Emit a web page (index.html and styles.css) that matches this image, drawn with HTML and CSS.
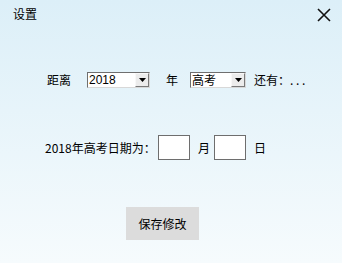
FILE: index.html
```html
<!DOCTYPE html>
<html lang="zh">
<head>
<meta charset="utf-8">
<link rel="stylesheet" href="styles.css">
</head>
<body>
<div class="win">
  <div class="titlebar">
    <span class="title">设置</span>
    <svg class="close" width="14" height="14" viewBox="0 0 14 14"><path d="M1 1 L13 13 M13 1 L1 13" stroke="#111" stroke-width="1.6" fill="none"/></svg>
  </div>
  <div class="row row1">
    <span class="lbl">距离</span>
    <div class="select sel-year"><span class="val">2018</span><span class="btn"><svg width="7" height="4" viewBox="0 0 7 4"><path d="M0 0 H7 L3.5 4 Z" fill="#000"/></svg></span></div>
    <span class="lbl nian">年</span>
    <div class="select sel-exam"><span class="val">高考</span><span class="btn"><svg width="7" height="4" viewBox="0 0 7 4"><path d="M0 0 H7 L3.5 4 Z" fill="#000"/></svg></span></div>
    <span class="lbl left">还有：. . .</span>
  </div>
  <div class="row row2">
    <span class="lbl date">2018年高考日期为：</span>
    <div class="box"></div>
    <span class="lbl unit">月</span>
    <div class="box box2"></div>
    <span class="lbl unit">日</span>
  </div>
  <div class="row row3">
    <div class="save">保存修改</div>
  </div>
</div>
</body>
</html>
```
FILE: styles.css
```css
html, body { margin: 0; padding: 0; }
body { font-family: "Noto Sans CJK SC", "DejaVu Sans", sans-serif; font-size: 12px; color: #000; }
.win {
  width: 342px; height: 263px; box-sizing: border-box;
  background: linear-gradient(#dceff8, #f6fbfd);
  display: flex; flex-direction: column;
}
.titlebar { height: 28px; display: flex; align-items: center; justify-content: space-between; padding: 0 11px 0 13px; }
.title { font-size: 12px; line-height: 14px; }
.close { margin-top: 2px; }
.row { display: flex; align-items: center; }
.row1 { margin-top: 44px; height: 16px; padding-left: 47px; }
.lbl { line-height: 14px; white-space: nowrap; flex-shrink: 0; }
.select {
  box-sizing: border-box; height: 16px; display: flex; align-items: stretch;
  background: #fff; border: 1px solid; border-color: #6f6f6f #d8d8d8 #d8d8d8 #6f6f6f;
}
.sel-year { width: 63px; margin-left: 16px; }
.sel-exam { width: 56px; margin-left: 12px; }
.val { flex: 1; font-size: 12px; line-height: 14px; padding-left: 1px; font-family: "Liberation Sans", "Noto Sans CJK SC", sans-serif; }
.sel-exam .val { font-family: "Noto Sans CJK SC", sans-serif; }
.btn {
  width: 14px; box-sizing: border-box; background: #ececec;
  border: 1px solid; border-color: #f8f8f8 #7a7a7a #7a7a7a #f8f8f8;
  display: flex; align-items: center; justify-content: center;
}
.nian { margin-left: 16px; }
.left { margin-left: 8px; }
.row2 { margin-top: 47px; height: 25px; padding-left: 45px; }
.date { width: 113px; }
.box { width: 32px; height: 25px; box-sizing: border-box; background: #fff; border: 1px solid #6e6e6e; }
.unit { margin-left: 8px; }
.box2 { margin-left: 4px; }
.row3 { margin-top: 47px; padding-left: 126px; }
.save { width: 73px; height: 33px; background: #dcdcdc; display: flex; align-items: center; justify-content: center; font-size: 12px; }
```
